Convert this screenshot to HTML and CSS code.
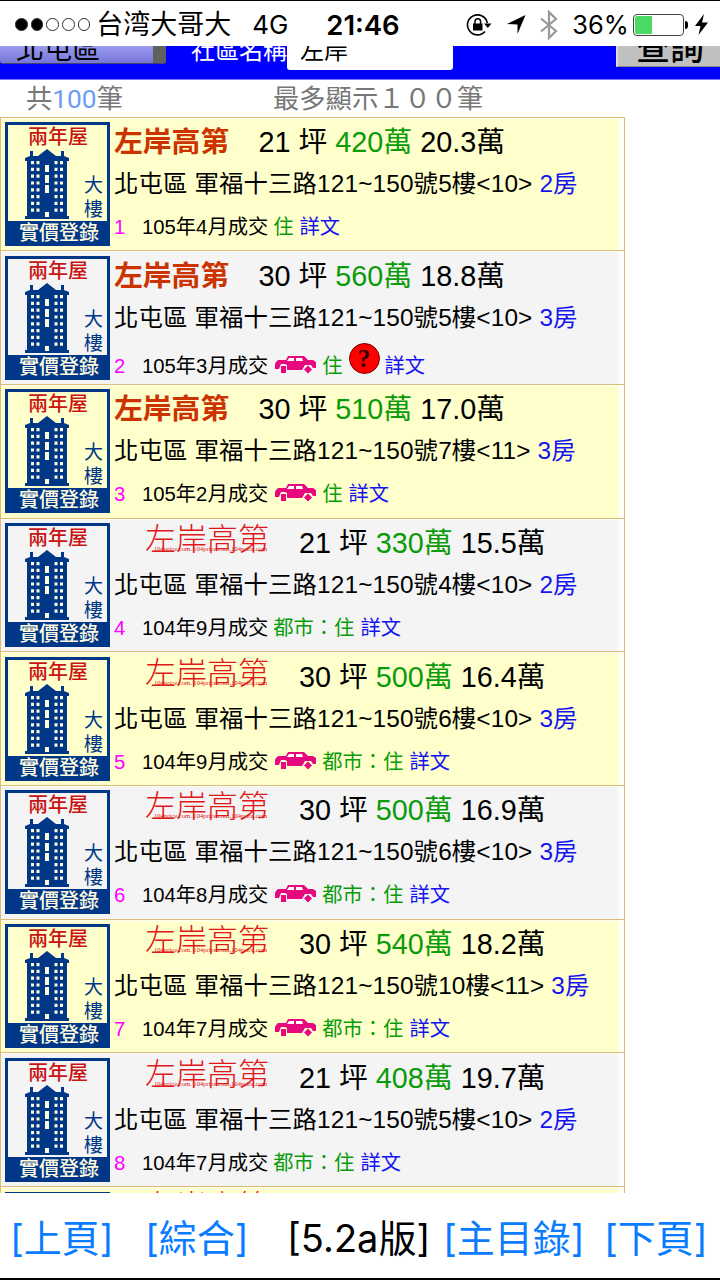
FILE: index.html
```html
<!DOCTYPE html>
<html lang="zh-Hant">
<head>
    <meta charset="UTF-8">
    <meta name="viewport" content="width=device-width, initial-scale=1.0">
    <title>實價登錄</title>
    <link rel="stylesheet" href="styles.css">
</head>
<body>
    <svg class="defs" width="0" height="0">
        <symbol id="building" viewBox="0 0 44 70">
            <path fill="#003787" d="M0 9l5-2V2h3v5h5l9-7 9 7h5V2h3v5l5 2v3h-2v55h2v3H0v-3h2V12H0z"/>
            <path stroke="#fffbe0" stroke-width="3" stroke-dasharray="3.2 3.6" d="M7.5 12v54M13 12v54M31 12v54M36.500 12v54"/>
            <path fill="#fffbe0" d="M20 16h4v7h-4zM20 26h4v8h-4zM20 36h4v8h-4zM20 63h4v5h-4z"/>
        </symbol>
        <symbol id="car" viewBox="0 0 42 18">
            <path fill="#e5087e" d="M1 6l2-2h8l2-4h16l4 4h5l3 2v6h-3l-2-3h-6l-3 5H12v-5l-2-1H6l-2 5H0V8z"/>
            <path fill="#e5087e" d="M6 10h5v7H6z"/>
            <path fill="#e5087e" d="M33 9.500l4 4-4 4-4-4z"/>
            <path fill="#fff" d="M14 2h5v3h-7zM21 2h6l1 3h-7z"/>
        </symbol>
    </svg>

    <header class="status-bar">
        <div class="signal"><i class="on"></i><i class="on"></i><i></i><i></i><i></i></div>
        <span class="carrier">台湾大哥大</span>
        <span class="network">4G</span>
        <span class="clock">21:46</span>
        <svg class="lock" width="26" height="24" viewBox="0 0 26 24">
            <path d="M19 18.500A10 10 0 1 1 21.300 10" fill="none" stroke="#000" stroke-width="1.600"/>
            <path d="M18 10.500h7.500l-3.700 4.500z"/>
            <path d="M7 10.500h9.500v7H7z"/>
            <path d="M9 11V8.500a2.800 2.800 0 0 1 5.600 0V11" fill="none" stroke="#000" stroke-width="1.500"/>
        </svg>
        <svg class="location" width="20" height="21" viewBox="0 0 20 21"><path d="M19.500 1L11.500 20V10.500L1 10z"/></svg>
        <svg class="bluetooth" width="18" height="30" viewBox="0 0 18 30"><path d="M1 8.500L16 21l-7 7V2l7 7L1 21.500" fill="none" stroke="#999" stroke-width="2.200"/></svg>
        <span class="percent">36%</span>
        <div class="battery"><div class="level" style="width: 36%"></div></div>
        <svg class="bolt" width="13" height="21" viewBox="0 0 13 21"><path d="M9 0L0 12h5.500L3.500 21 13 8.500H7z"/></svg>
    </header>

    <div class="search-bar">
        <div class="district"><span>北屯區</span></div>
        <span class="search-label">社區名稱</span>
        <div class="keyword">左岸</div>
        <div class="search-btn">查詢</div>
    </div>

    <div class="summary">
        <span class="count">共<b>100</b>筆</span>
        <span>最多顯示１００筆</span>
    </div>

    <main class="list" id="list"></main>

    <footer class="toolbar">
        <a>[上頁]</a>
        <a>[綜合]</a>
        <span class="version">[5.2a版]</span>
        <a>[主目錄]</a>
        <a>[下頁]</a>
    </footer>

    <script>
        // size, total price, unit price, floor, rooms, date, then the flags
        const deals = [
            { size: 21, total: 420, unit: "20.3", floor: "5樓<10>", rooms: 2, date: "105年4月", zone: "住" },
            { size: 30, total: 560, unit: "18.8", floor: "5樓<10>", rooms: 3, date: "105年3月", zone: "住", car: true, note: true },
            { size: 30, total: 510, unit: "17.0", floor: "7樓<11>", rooms: 3, date: "105年2月", zone: "住", car: true },
            { size: 21, total: 330, unit: "15.5", floor: "4樓<10>", rooms: 2, date: "104年9月", zone: "都市：住", logo: true },
            { size: 30, total: 500, unit: "16.4", floor: "6樓<10>", rooms: 3, date: "104年9月", zone: "都市：住", logo: true, car: true },
            { size: 30, total: 500, unit: "16.9", floor: "6樓<10>", rooms: 3, date: "104年8月", zone: "都市：住", logo: true, car: true },
            { size: 30, total: 540, unit: "18.2", floor: "10樓<11>", rooms: 3, date: "104年7月", zone: "都市：住", logo: true, car: true },
            { size: 21, total: 408, unit: "19.7", floor: "5樓<10>", rooms: 2, date: "104年7月", zone: "都市：住", logo: true }
        ];

        const badge = `
                <div class="badge">
                    <div class="age">兩年屋</div>
                    <div class="badge-body">
                        <svg width="44" height="70"><use href="#building"/></svg>
                        <div class="kind">大<br>樓</div>
                    </div>
                    <div class="badge-foot">實價登錄</div>
                </div>`;
        const logo = '<span class="logo">左岸高第<small>104price.com. 104price.com.104price.com</small></span>';

        document.getElementById("list").innerHTML = deals.map((d, i) => `
            <div class="deal">
                ${badge}
                <div class="info">
                    <div class="line price">
                        ${d.logo ? logo : '<span class="name">左岸高第</span>'}
                        <span>${d.size} 坪 <em>${d.total}萬</em> ${d.unit}萬</span>
                    </div>
                    <div class="line address">北屯區 軍福十三路121~150號${d.floor.replace("<", "&lt;").replace(">", "&gt;")} <a>${d.rooms}房</a></div>
                    <div class="line meta${d.note ? " with-note" : ""}">
                        <span class="num">${i + 1}</span>
                        <span>${d.date}成交</span>
                        ${d.car ? '<svg class="car" width="42" height="18"><use href="#car"/></svg>' : ""}
                        <em>${d.zone}</em>
                        ${d.note ? '<span class="note">?</span>' : ""}
                        <a>詳文</a>
                    </div>
                </div>
            </div>`).join("") + `<div class="deal next">${badge}<div class="info"><div class="line price">${logo}</div></div></div>`;
    </script>
</body>
</html>
```
FILE: styles.css
```css
* {
    box-sizing: border-box;
}
body {
    margin: 0;
    width: 720px;
    height: 1280px;
    overflow: hidden;
    display: flex;
    flex-direction: column;
    background: #fff;
    color: #000;
    font-family: "Liberation Sans", "Noto Sans CJK TC", sans-serif;
    white-space: nowrap;
    border-bottom: 2px solid #000;
}
svg {
    display: block;
    flex: none;
}
.defs {
    position: absolute;
}
em {
    font-style: normal;
    color: #0a9b0a;
}
a {
    color: #1414f0;
}

/* status bar */
.status-bar {
    flex: none;
    height: 46px;
    border-top: 1px solid #000;
    display: flex;
    align-items: center;
    padding: 2px 0 0 15px;
    font: 27px/44px Inter, "Noto Sans CJK TC", sans-serif;
}
.signal {
    display: flex;
    gap: 3.200px;
}
.signal i {
    width: 12.500px;
    height: 12.500px;
    border: 1px solid #333;
    border-radius: 50%;
}
.signal .on {
    background: #000;
}
.carrier {
    width: 134px;
    margin-left: 6px;
}
.network {
    width: 37px;
    margin-left: 22px;
    font-size: 26px;
}
.clock {
    width: 74px;
    margin-left: 37px;
    font-size: 27.500px;
    font-weight: 600;
}
.lock {
    margin-left: 66px;
}
.location {
    margin-left: 14px;
}
.bluetooth {
    margin-left: 14px;
}
.percent {
    width: 54px;
    margin-left: 14px;
    font-size: 25.500px;
}
.battery {
    position: relative;
    width: 51px;
    height: 22px;
    margin-left: 7px;
    padding: 1px;
    border: 1px solid #444;
    border-radius: 4px;
}
.battery::after {
    content: "";
    position: absolute;
    right: -5px;
    top: 6px;
    width: 3px;
    height: 8px;
    border-radius: 0 3px 3px 0;
    background: #000;
}
.level {
    height: 100%;
    border-radius: 2px 0 0 2px;
    background: #4cd964;
}
.bolt {
    margin-left: 11px;
}

/* search form, scrolled half under the status bar */
.search-bar {
    flex: none;
    height: 34px;
    overflow: hidden;
    display: flex;
    align-items: flex-start;
    background: #00f;
    border-bottom: 1px solid #77f;
    font-size: 24px;
}
.district {
    width: 166px;
    height: 18px;
    padding-left: 16px;
    border-right: 13px solid #606060;
    border-bottom: 1px solid #446;
    border-radius: 0 0 3px 3px;
    background: linear-gradient(#9a9af0, #7676d8);
    font-size: 28px;
    line-height: 7px;
}
.district span {
    display: block;
}
.keyword, .search-label {
    line-height: 10px;
}
.search-label {
    margin-left: 25px;
    color: #fff;
}
.keyword {
    width: 166px;
    height: 24px;
    padding-left: 13px;
    background: #fff;
    border-radius: 0 0 3px 3px;
}
.search-btn {
    width: 104px;
    height: 21px;
    margin-left: auto;
    padding-left: 18px;
    border-left: 2px solid #ddd;
    border-bottom: 1px solid #888;
    background: #c0c0c0;
    font-size: 34px;
    font-weight: 500;
    line-height: 5px;
}
.summary {
    flex: none;
    height: 36.500px;
    padding: 1px 0 0 26px;
    display: flex;
    font: 26.300px/37px Roboto, "Noto Sans CJK TC", sans-serif;
    color: #777;
}
.summary b {
    font-weight: 400;
    color: #6b9df8;
}
.count {
    width: 247px;
}

/* deals */
.list {
    flex: none;
    width: 625px;
    height: 1076.500px;
    overflow: hidden;
    border-left: 1px solid #dcbc78;
    border-right: 1px solid #dcbc78;
}
.deal {
    height: 133.700px;
    display: flex;
    padding: 4.500px 0 0 4px;
    border-top: 1.500px solid #dcbc78;
    box-shadow: inset -6px 1px #fffef2;
    background: #ffc;
}
.deal:nth-child(even) {
    box-shadow: inset -6px 1px #fcfcfa;
    background: #f4f4f4;
}
.badge {
    width: 105px;
    height: 124px;
    border: 3px solid #003787;
    color: #003787;
    flex: none;
}
.age {
    height: 24px;
    padding-left: 20px;
    font-size: 20px;
    font-weight: 500;
    line-height: 25px;
    color: #c81414;
}
.badge-body {
    height: 72px;
    display: flex;
    padding-left: 17px;
}
.kind {
    padding: 25px 0 0 15px;
    font-size: 19px;
    line-height: 24px;
}
.badge-foot {
    height: 22px;
    padding-left: 11px;
    background: #003787;
    color: #fffbe0;
    font-size: 20px;
    font-weight: 500;
    line-height: 25px;
}
.info {
    padding: 1px 0 0 4px;
}
.line {
    display: flex;
    align-items: center;
    height: 42px;
}
.price {
    font-size: 28.800px;
    line-height: 38px;
    height: 38px;
}
.name {
    width: 144.500px;
    font-weight: 700;
    color: #c30;
}
/* community name shown as its own sign */
.logo {
    position: relative;
    width: 154px;
    margin-left: 31px;
    font-family: "Noto Sans CJK TC", serif;
    font-size: 31px;
    font-weight: 300;
    color: #e01818;
    top: -6px;
}
.logo small {
    position: absolute;
    left: 9px;
    top: 28px;
    font: 6.600px/6px "Liberation Serif", serif;
}
.next .logo {
    top: -8px;
}
.address {
    display: block;
    height: 46px;
    font-size: 24.400px;
    line-height: 46px;
    letter-spacing: 0.130px;
}
.meta {
    height: 38px;
    padding-top: 2px;
    font-size: 20.300px;
    line-height: 38px;
}
.num {
    width: 28px;
    color: #f0f;
}
.meta em {
    margin: 0 6px 0 5px;
}
.car + em {
    margin-left: 5px;
}
.car {
    margin: -2px 0 0 7px;
}
.with-note {
    height: 48px;
    line-height: 46px;
}
.note {
    width: 31px;
    height: 31px;
    margin: -15px 5px 0 0;
    border: 1px solid #700;
    border-radius: 50%;
    background: #f00;
    color: #300;
    font: bold 25px/29px "Liberation Serif", serif;
    text-align: center;
}

/* bottom links */
.toolbar {
    flex: 1;
    display: flex;
    align-items: center;
    padding: 4px 0 0 10px;
    font: 38px/60px Inter, "Noto Sans CJK TC", sans-serif;
}
.toolbar a {
    flex: none;
    width: 135px;
    color: #0a7cff;
}
.toolbar a:nth-child(2) {
    width: 142px;
}
.toolbar .version {
    flex: none;
    width: 156px;
}
.toolbar a:nth-child(4) {
    width: 161px;
}
```
